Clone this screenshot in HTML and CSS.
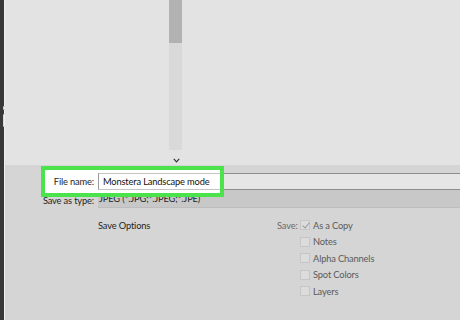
FILE: index.html
```html
<!DOCTYPE html>
<html>
  <head>
    <title>Save As</title>
    <meta name="viewport" content="width=device-width, initial-scale=1.0" />
    <link rel="stylesheet" href="styles.css">
  </head>
  <body>
    <div class="sidebar">
      <svg class="edge-marks" width="6" height="24" viewBox="0 0 6 24">
        <path d="M5 1.5H3.5V4.5H5" fill="none" stroke="#cfcfcf" stroke-width="1" />
        <path d="M5 9.5H3.5V21.5H5" fill="none" stroke="#d8d8d8" stroke-width="1" />
      </svg>
    </div>

    <div class="main">
      <div class="browser">
        <div class="scrollbar">
          <div class="thumb"></div>
          <div class="track"></div>
          <div class="arrow">
            <svg width="7" height="5" viewBox="0 0 7 5">
              <path d="M0.8 0.8L3.5 3.8L6.2 0.8" fill="none" stroke="#333" stroke-width="1.2" />
            </svg>
          </div>
        </div>
      </div>

      <div class="panel">
        <!-- green callout drawn over the file name row -->
        <div class="highlight"></div>

        <div class="form-row name-row">
          <span class="row-label lit">File name:</span>
          <div class="field name-field">
            <span class="value">Monstera Landscape mode</span>
          </div>
        </div>

        <div class="form-row type-row">
          <span class="row-label">Save as type:</span>
          <div class="field type-field">JPEG (*.JPG;*.JPEG;*.JPE)</div>
        </div>

        <div class="options">
          <div class="options-title">Save Options</div>
          <div class="save-label">Save:</div>
          <ul class="checks">
            <li><span class="box checked"></span>As a Copy</li>
            <li><span class="box"></span>Notes</li>
            <li><span class="box"></span>Alpha Channels</li>
            <li><span class="box"></span>Spot Colors</li>
            <li><span class="box"></span>Layers</li>
          </ul>
        </div>
      </div>
    </div>
  </body>
</html>
```

FILE: styles.css
```css
body {
  margin: 0;
  width: 460px;
  height: 320px;
  display: flex;
  overflow: hidden;
  background: #e3e3e3;
  font-family: Lato, "Liberation Sans", sans-serif;
  font-size: 9.3px;
  letter-spacing: -0.15px;
  color: #1e1e1e;
  white-space: nowrap;
}
.sidebar {
  width: 4px;
  background: #383838;
  border-right: 1px solid #efefef;
}
.edge-marks {
  display: block;
  margin-top: 105px;
  overflow: visible;
}
.main {
  flex: 1;
  display: flex;
  flex-direction: column;
}
.browser {
  height: 165px;
  display: flex;
  padding-left: 164px;
  box-sizing: border-box;
}
.scrollbar {
  width: 13px;
  display: flex;
  flex-direction: column;
}
.thumb {
  height: 43px;
  background: #b2b2b2;
}
.track {
  height: 107px;
  background: #d9d9d9;
}
.arrow {
  display: flex;
  justify-content: center;
  padding-top: 8px;
  padding-left: 1px;
}
.arrow svg {
  display: block;
}
.panel {
  flex: 1;
  position: relative;
  background: #d5d5d5;
  padding-top: 8px;
}
.highlight {
  position: absolute;
  left: 36px;
  top: 1px;
  width: 183px;
  height: 31px;
  box-sizing: border-box;
  border: 4px solid #4be34b;
  background: #fff;
  z-index: 1;
}
.form-row {
  display: flex;
  align-items: stretch;
}
.row-label {
  width: 93px;
  box-sizing: border-box;
  padding-right: 4px;
  text-align: right;
  line-height: 17px;
}
.lit {
  position: relative;
  z-index: 2;
}
.field {
  flex: 1;
  box-sizing: border-box;
  height: 17px;
  line-height: 15px;
}
.name-field {
  background: #e6e6e6;
  border-top: 1px solid #8d8d8d;
  border-bottom: 1px solid #8d8d8d;
}
.name-field .value {
  position: relative;
  z-index: 2;
  display: block;
  width: 122px;
  height: 17px;
  margin-top: -1px;
  box-sizing: border-box;
  padding-left: 4px;
  line-height: 16px;
  color: #111;
  border-left: 1px solid #9a9a9a;
  border-top: 1px solid #c4c4c4;
  border-bottom: 1px solid #c4c4c4;
}
.type-row .row-label {
  padding-top: 2px;
}
.type-field {
  height: 18px;
  line-height: 18px;
  padding-left: 1px;
  background: #c8c8c8;
  border-bottom: 1px solid #bdbdbd;
}
.options {
  display: flex;
  padding-left: 93px;
  margin-top: 8px;
}
.options-title {
  width: 179px;
  line-height: 17px;
}
.save-label {
  width: 23px;
  line-height: 17px;
  color: #6a6a6a;
}
.checks {
  list-style: none;
  margin: 0;
  padding: 0;
  color: #5a5a5a;
}
.checks li {
  display: flex;
  align-items: center;
  height: 16.5px;
  gap: 3px;
}
.box {
  width: 10px;
  height: 10px;
  box-sizing: border-box;
  background: #dcdcdc;
  border: 1px solid #c6c6c6;
  position: relative;
}
.box.checked::after {
  content: "";
  position: absolute;
  left: 3px;
  top: 0px;
  width: 3px;
  height: 6px;
  border-right: 1px solid #9a9a9a;
  border-bottom: 1px solid #9a9a9a;
  transform: rotate(40deg);
}
```
